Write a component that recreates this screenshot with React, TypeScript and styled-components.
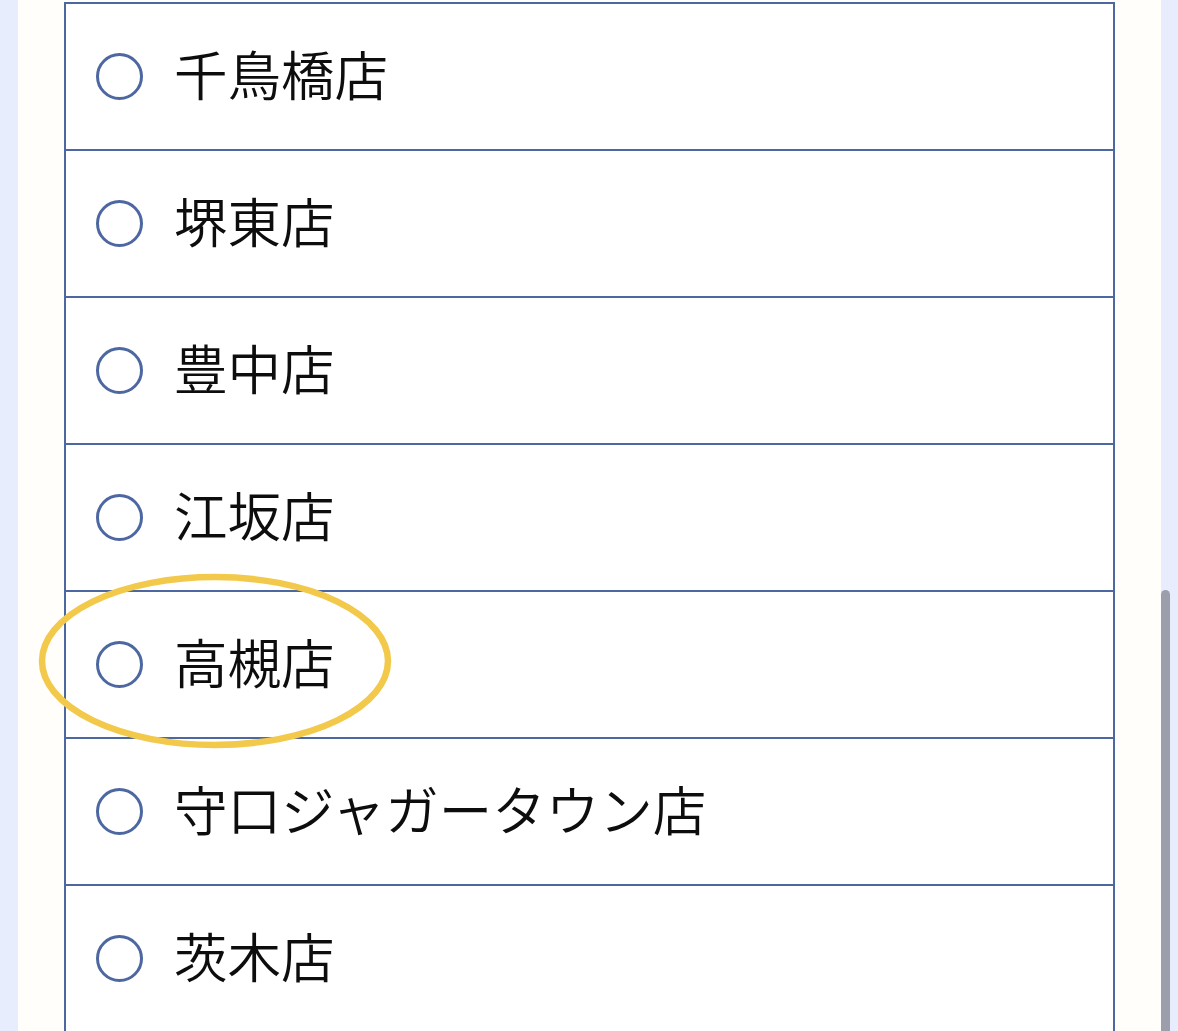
import styled, { createGlobalStyle } from 'styled-components'

const GlobalStyle = createGlobalStyle`
  html, body {
    margin: 0;
    height: 100%;
    overflow: hidden;
    background-color: #e7edfd;
    font-family: "Noto Sans CJK JP", "Noto Sans", sans-serif;
  }
`

const Page = styled('main')`
  height: 100vh;
  padding-left: 18px;
  display: flex;
  position: relative;
`

const Panel = styled('section')`
  width: 1143px;
  background-color: #fffefa;
  padding: 2px 46px 0 46px;
  box-sizing: border-box;
`

const StoreList = styled('ul')`
  list-style: none;
  margin: 0;
  padding: 0;
  border-left: 2px solid #4d68a1;
  border-right: 2px solid #4d68a1;
  background-color: #ffffff;
`

const StoreRow = styled('li')<{ $marked?: boolean }>`
  position: relative;
  height: 145px;
  border-top: 2px solid #4d68a1;
  display: flex;
  align-items: center;
  gap: 31px;
  padding-left: 30px;
  z-index: ${(p) => (p.$marked ? 2 : 'auto')};
`

const Radio = styled('span')`
  width: 41px;
  height: 41px;
  border: 3px solid #4d68a1;
  border-radius: 50%;
  flex-shrink: 0;
`

const Label = styled('span')`
  color: #0d0d0d;
  font-size: 53.5px;
  font-weight: 350;
  line-height: 1;
  padding-bottom: 8px;
`

const Marker = styled('svg')`
  position: absolute;
  left: -29px;
  top: -20px;
  width: 358px;
  height: 180px;
  pointer-events: none;
  overflow: visible;
`

const ScrollThumb = styled('div')`
  position: absolute;
  left: 1161px;
  top: 590px;
  bottom: -10px;
  width: 9px;
  border-radius: 5px;
  background-color: #9c9eac;
`

const stores = [
  '千鳥橋店',
  '堺東店',
  '豊中店',
  '江坂店',
  '高槻店',
  '守口ジャガータウン店',
  '茨木店',
]

function App() {
  return (
    <>
      <GlobalStyle />
      <Page>
        <Panel>
          <StoreList>
            {stores.map((name) => {
              const marked = name === '高槻店'
              return (
                <StoreRow key={name} $marked={marked}>
                  <Radio />
                  <Label>{name}</Label>
                  {marked && (
                    <Marker viewBox="0 0 358 180">
                      <ellipse cx="178" cy="89" rx="173" ry="84" fill="none" stroke="#f2c94b" strokeWidth="6.5" />
                    </Marker>
                  )}
                </StoreRow>
              )
            })}
          </StoreList>
        </Panel>
        <ScrollThumb />
      </Page>
    </>
  )
}

export default App
